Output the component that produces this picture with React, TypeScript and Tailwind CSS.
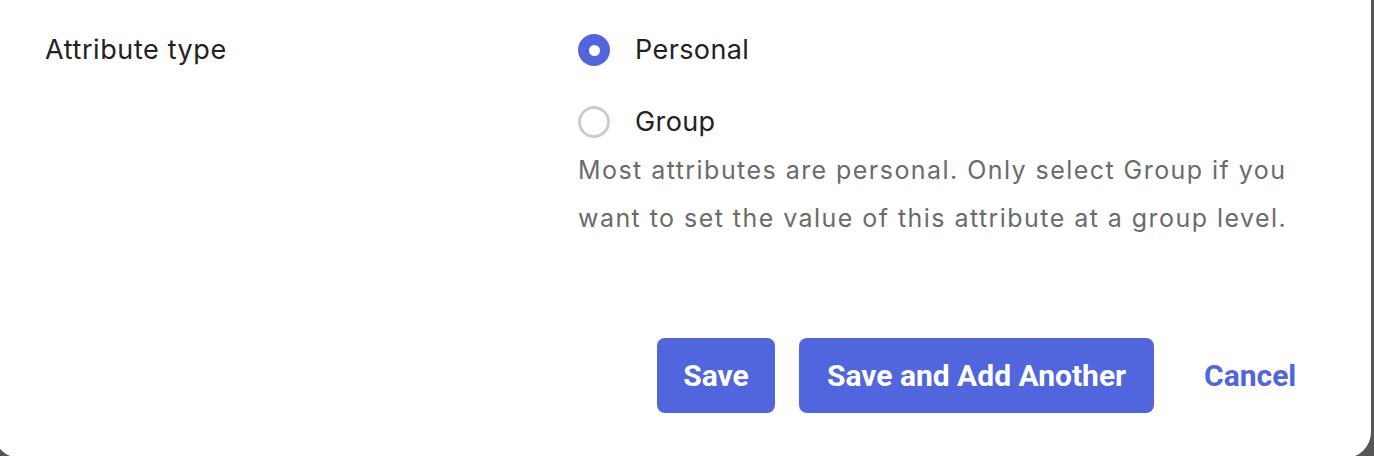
export default function App() {
  return (
    <div className="w-[1374px] h-[456px] bg-[#555555] overflow-hidden" style={{ fontFamily: "Inter, 'Noto Sans', sans-serif" }}>
      <div className="ml-[-6px] w-[1377px] h-[458px] bg-white rounded-b-[26px] pl-[51px] pt-[34px]">
        <div className="flex">
          <div className="w-[533px] h-[32px] flex items-center text-[27px] tracking-[0.6px] text-[#222222]">Attribute type</div>
          <div className="flex flex-col">
            <div className="flex items-center h-[32px]">
              <span className="w-[32px] h-[32px] rounded-full bg-[#5166dc] flex items-center justify-center">
                <span className="w-[11px] h-[11px] rounded-full bg-white" />
              </span>
              <span className="ml-[25px] text-[27px] tracking-[0.4px] text-[#222222]">Personal</span>
            </div>
            <div className="flex items-center h-[32px] mt-[40px]">
              <span className="w-[32px] h-[32px] rounded-full border-[3px] border-[#cccccc] bg-white" />
              <span className="ml-[25px] text-[27px] tracking-[0.4px] text-[#222222]">Group</span>
            </div>
            <p className="mt-[8px] text-[25px] tracking-[1.45px] leading-[48px] text-[#6b6b6b] w-[740px]">
              Most attributes are personal. Only select Group if you want to set the value of this attribute at a group level.
            </p>
            <div className="flex items-center mt-[96px] ml-[79px]" style={{ fontFamily: "Roboto, 'Liberation Sans', sans-serif" }}>
              <button className="w-[118px] h-[75px] rounded-[8px] bg-[#5166dc] text-white font-bold text-[30px]">Save</button>
              <button className="ml-[24px] w-[355px] h-[75px] rounded-[8px] bg-[#5166dc] text-white font-bold text-[30px]">Save and Add Another</button>
              <button className="ml-[50px] text-[#5166dc] font-bold text-[30px]">Cancel</button>
            </div>
          </div>
        </div>
      </div>
    </div>
  );
}
